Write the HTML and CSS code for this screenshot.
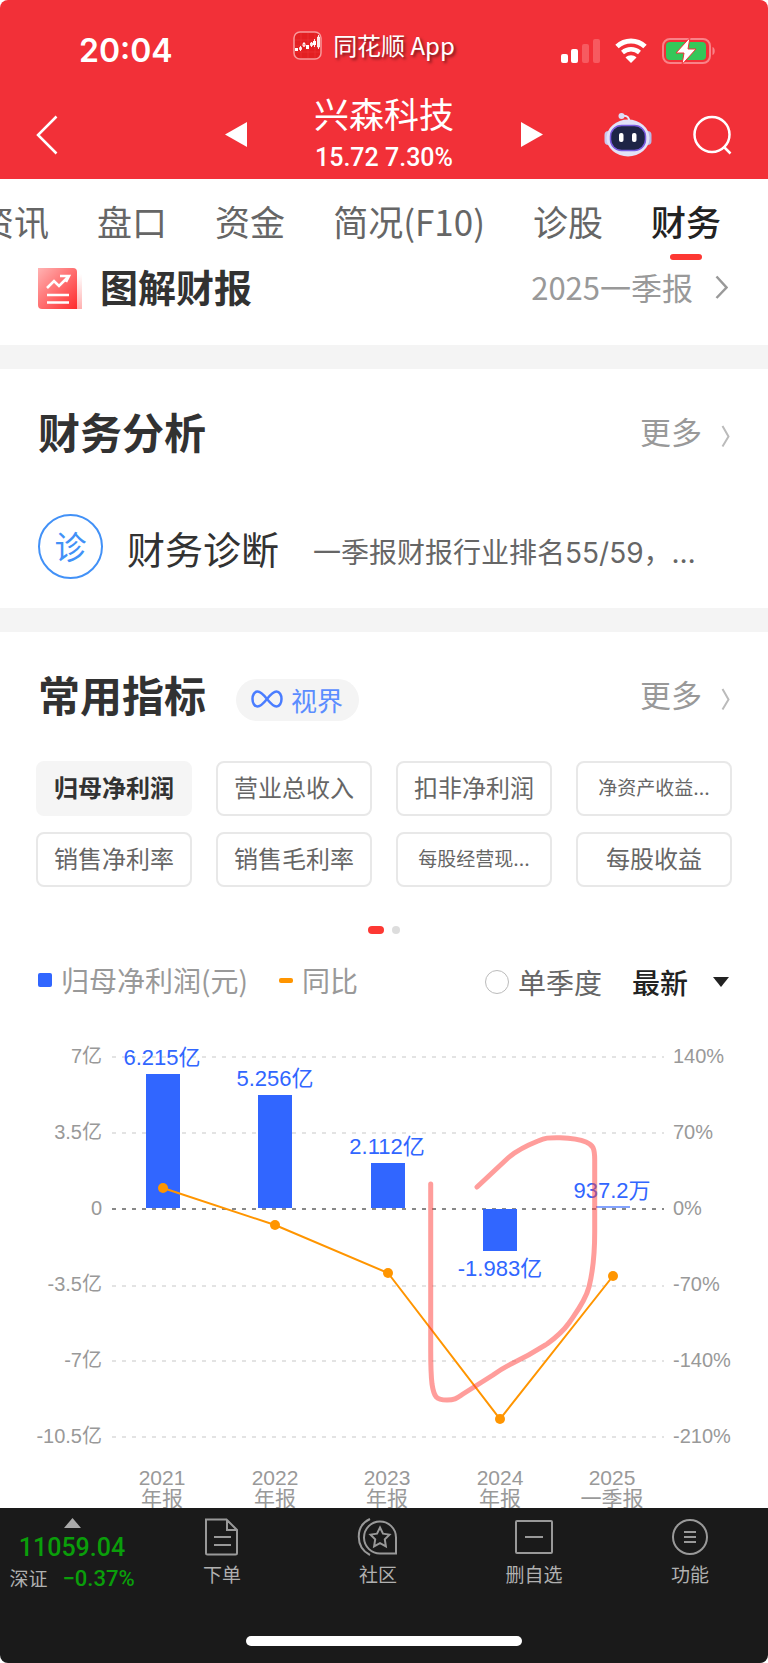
FILE: index.html
```html
<!DOCTYPE html>
<html lang="zh-CN">

<head>
  <meta charset="utf-8">
  <meta name="viewport" content="width=device-width, initial-scale=1">
  <title>兴森科技 - 财务</title>
  <link rel="stylesheet" href="styles.css">
</head>

<body>
  <div class="app">
    <header class="header">
      <div class="status-bar">
        <span class="time">20:04</span>
        <div class="app-name">
          <svg width="29" height="29" viewBox="0 0 29 29">
            <rect x="1" y="1" width="27" height="27" rx="6" fill="#e31f22" stroke="#f8999b" stroke-width="1.5" />
            <path d="M2 9h25M2 15h25M2 21h25M8 2v25M15 2v25M22 2v25" stroke="#ee3a3c" stroke-width="0.5" />
            <path d="M2 17h3v3h-3zM13 14h3v4h-3zM20 10h3v4h-3z" fill="#fff" />
            <path d="M7.500 15v5M6.500 16.500h2v2h-2zM11 11v5M10 12.500h2v2.500h-2zM18.500 11v5M17.500 12h2v2.500h-2zM21.500 8v8M25.500 4v14M24.500 6h2v10h-2z" fill="none" stroke="#fff" stroke-width="0.900" />
          </svg>
          <span>同花顺 App</span>
        </div>
        <div class="signals">
          <svg width="39" height="26" viewBox="0 0 39 26">
            <rect x="0" y="16" width="7" height="9" rx="2" fill="#fff" />
            <rect x="10" y="11" width="7" height="14" rx="2" fill="#fff" />
            <rect x="21" y="6" width="7" height="19" rx="2" fill="#f75a60" />
            <rect x="32" y="1" width="7" height="24" rx="2" fill="#f75a60" />
          </svg>
          <svg width="32" height="26" viewBox="0 0 32 26">
            <path d="M2 8.500C10 1.200 22 1.200 30 8.500" fill="none" stroke="#fff" stroke-width="5" />
            <path d="M7.500 14.500c5-4.300 12-4.300 17 0" fill="none" stroke="#fff" stroke-width="4.500" />
            <path d="M16 25l-5.500-5.500c3-3 8-3 11 0z" fill="#fff" />
          </svg>
          <svg width="54" height="28" viewBox="0 0 54 28">
            <rect x="1" y="2" width="47" height="24" rx="7" fill="none" stroke="#f98288" stroke-width="2" />
            <rect x="4" y="5" width="40" height="18" rx="4" fill="#34c759" />
            <path d="M50.500 10c3 1 3 7 0 8z" fill="#f98288" />
            <path d="M28 0.500L14 16h8l-2 11.500L34 12h-8z" fill="#fff" stroke="#f23038" stroke-width="1" />
          </svg>
        </div>
      </div>
      <div class="nav-bar">
        <button class="icon-btn" aria-label="返回">
          <svg width="22" height="40" viewBox="0 0 22 40">
            <path d="M20.500 1.500L2 20l18.500 18.500" fill="none" stroke="#fff" stroke-width="2.500" />
          </svg>
        </button>
        <div class="stock">
          <button class="icon-btn" aria-label="上一只">
            <svg width="22" height="25" viewBox="0 0 22 25"><path d="M22 0v25L0 12.500z" fill="#fff" /></svg>
          </button>
          <div class="stock-info">
            <h1>兴森科技</h1>
            <p>15.72 7.30%</p>
          </div>
          <button class="icon-btn" aria-label="下一只">
            <svg width="22" height="25" viewBox="0 0 22 25"><path d="M0 0v25L22 12.500z" fill="#fff" /></svg>
          </button>
        </div>
        <div class="nav-tools">
          <button class="icon-btn" aria-label="智能助手">
            <svg width="48" height="46" viewBox="0 0 48 46">
              <path d="M18 4c6-1 7 2 7.500 6" fill="none" stroke="#e6e6fa" stroke-width="2" />
              <circle cx="17.500" cy="4" r="3" fill="#dcdcf5" />
              <rect x="0.500" y="19" width="8" height="14" rx="4" fill="#c9c9ee" />
              <rect x="39.500" y="19" width="8" height="14" rx="4" fill="#b9b9e6" />
              <ellipse cx="24" cy="26" rx="21.500" ry="18.500" fill="#e2e2f8" />
              <rect x="6.500" y="13.500" width="35" height="25" rx="11" fill="#1e2546" stroke="#7a5ce0" stroke-width="1.500" />
              <rect x="15" y="21" width="4.500" height="9" rx="2" fill="#fff" />
              <rect x="28" y="21" width="4.500" height="9" rx="2" fill="#fff" />
            </svg>
          </button>
          <button class="icon-btn" aria-label="搜索">
            <svg width="39" height="40" viewBox="0 0 39 40">
              <circle cx="19" cy="19.500" r="17.500" fill="none" stroke="#fff" stroke-width="2.500" />
              <path d="M30.500 31.500l7 7" stroke="#fff" stroke-width="2.500" />
            </svg>
          </button>
        </div>
      </div>
    </header>

    <nav class="tabs">
      <a href="#">资讯</a>
      <a href="#">盘口</a>
      <a href="#">资金</a>
      <a href="#">简况(F10)</a>
      <a href="#">诊股</a>
      <a href="#" class="active">财务</a>
    </nav>

    <main class="content">
      <section class="report">
        <svg width="44" height="41" viewBox="0 0 44 41">
          <defs>
            <linearGradient id="cover" x1="0" y1="0" x2="1" y2="1">
              <stop offset="0" stop-color="#ffb3b3" />
              <stop offset="1" stop-color="#ff2a2c" />
            </linearGradient>
            <linearGradient id="page" x1="0" y1="0" x2="0" y2="1">
              <stop offset="0" stop-color="#fff" />
              <stop offset="1" stop-color="#ffb0b0" />
            </linearGradient>
          </defs>
          <path d="M36 6h8v35h-8z" fill="url(#page)" />
          <path d="M0 0h35a4 4 0 0 1 4 4v37H4a4 4 0 0 1-4-4z" fill="url(#cover)" />
          <path d="M9 20l7-7 5 5 9-9M22 8h9l-3 6M9 27h22M9 34.500h22" fill="none" stroke="#fff" stroke-width="2.600" />
        </svg>
        <h2 class="report-title">图解财报</h2>
        <a href="#" class="more">2025一季报
          <svg width="13" height="24" viewBox="0 0 13 24"><path d="M1.500 1.500L11.500 12.500l-10 10.500" fill="none" stroke="#999" stroke-width="2.500" /></svg>
        </a>
      </section>

      <section class="block">
        <div class="block-head">
          <h2>财务分析</h2>
          <a href="#" class="more">更多
            <svg width="9" height="32" viewBox="0 0 9 32"><path d="M1.500 11l6 10.500-6 10" fill="none" stroke="#bbb" stroke-width="2" /></svg>
          </a>
        </div>
        <a href="#" class="diagnose">
          <span class="diagnose-icon">诊</span>
          <span class="diagnose-name">财务诊断</span>
          <span class="diagnose-text">一季报财报行业排名55/59，…</span>
        </a>
      </section>

      <section class="block">
        <div class="block-head">
          <h2>常用指标</h2>
          <button class="vision">
            <svg width="32" height="18" viewBox="0 0 32 18">
              <path d="M16 9C12 4 9.500 1.500 6.500 1.500 3.500 1.500 1.500 5 1.500 9s2 7.500 5 7.500c3 0 5.500-2.500 9.500-7.500s6.500-7.500 9.500-7.500 5 3.500 5 7.500-2 7.500-5 7.500c-3 0-5.500-2.500-9.500-7.500z" fill="none" stroke="#4a7dff" stroke-width="2.500" />
            </svg>
            视界
          </button>
          <a href="#" class="more">更多
            <svg width="9" height="32" viewBox="0 0 9 32"><path d="M1.500 11l6 10.500-6 10" fill="none" stroke="#bbb" stroke-width="2" /></svg>
          </a>
        </div>
        <div class="chips">
          <button class="chip selected">归母净利润</button>
          <button class="chip">营业总收入</button>
          <button class="chip">扣非净利润</button>
          <button class="chip small">净资产收益...</button>
          <button class="chip">销售净利率</button>
          <button class="chip">销售毛利率</button>
          <button class="chip small">每股经营现...</button>
          <button class="chip">每股收益</button>
        </div>
        <div class="dots">
          <span class="dot current"></span>
          <span class="dot"></span>
        </div>
        <div class="legend">
          <span class="legend-bar"></span>
          <span>归母净利润(元)</span>
          <span class="legend-line"></span>
          <span>同比</span>
          <div class="filters">
            <label class="quarter"><input type="radio" name="quarter">单季度</label>
            <label class="period">
              <select aria-label="报告期">
                <option>最新</option>
              </select>
              <svg width="16" height="10" viewBox="0 0 16 10"><path d="M0 0h16L8 10z" fill="#222" /></svg>
            </label>
          </div>
        </div>
      </section>

      <svg class="chart" viewBox="0 0 768 510">
        <g class="grid">
          <path d="M112 47H664M112 123H664M112 276H664M112 351H664M112 427H664" />
          <path class="zero" d="M112 199H664" />
        </g>
        <g class="axis left">
          <text x="102" y="53">7亿</text>
          <text x="102" y="129">3.5亿</text>
          <text x="102" y="205">0</text>
          <text x="102" y="281">-3.5亿</text>
          <text x="102" y="357">-7亿</text>
          <text x="102" y="433">-10.5亿</text>
        </g>
        <g class="axis">
          <text x="673" y="53">140%</text>
          <text x="673" y="129">70%</text>
          <text x="673" y="205">0%</text>
          <text x="673" y="281">-70%</text>
          <text x="673" y="357">-140%</text>
          <text x="673" y="433">-210%</text>
        </g>
        <g class="bars">
          <rect x="146" y="64" width="34" height="134" />
          <rect x="258" y="85" width="34" height="113" />
          <rect x="371" y="153" width="34" height="45" />
          <rect x="483" y="199" width="34" height="42" />
          <rect x="596" y="196" width="34" height="2" opacity="0.6" />
        </g>
        <g class="values">
          <text x="162" y="55">6.215亿</text>
          <text x="275" y="76">5.256亿</text>
          <text x="387" y="144">2.112亿</text>
          <text x="500" y="266">-1.983亿</text>
          <text x="612" y="188">937.2万</text>
        </g>
        <polyline class="trend" points="163,178 275,215 388,263 500,409 613,266" />
        <g class="points">
          <circle cx="163" cy="178" r="5" />
          <circle cx="275" cy="215" r="5" />
          <circle cx="388" cy="263" r="5" />
          <circle cx="500" cy="409" r="5" />
          <circle cx="613" cy="266" r="5" />
        </g>
        <path class="mark" d="M430.700 174V340C430.700 360 431 366 432 374C434 387 436 390 447 390C455 390 457 388 463 384L493 365C500 360 505 357 513 353C530 345 536 341 547 334C558 326 564 320 569 313C575 304 585 292 589 277C594 257 594.700 240 594.700 222V150C594.700 138 593 135 586 132C578 128.500 568 128 560 127.700C548 127.500 545 128 538 131C528 135 517 140 508 148L477 177" />
        <g class="years">
          <text x="162" y="475">2021</text>
          <text x="162" y="496">年报</text>
          <text x="275" y="475">2022</text>
          <text x="275" y="496">年报</text>
          <text x="387" y="475">2023</text>
          <text x="387" y="496">年报</text>
          <text x="500" y="475">2024</text>
          <text x="500" y="496">年报</text>
          <text x="612" y="475">2025</text>
          <text x="612" y="496">一季报</text>
        </g>
      </svg>
    </main>

    <footer class="footer">
      <div class="toolbar">
        <button class="index">
          <svg width="17" height="10" viewBox="0 0 17 10"><path d="M8.500 0L17 10H0z" fill="#aaa" /></svg>
          <span class="index-value">11059.04</span>
          <span class="index-row">深证<span class="index-change">−0.37%</span></span>
        </button>
        <button class="tool">
          <svg width="38" height="38" viewBox="0 0 38 38">
            <path d="M3 1.500h20.500L34 12v23a1.500 1.500 0 0 1-1.500 1.500h-28A1.500 1.500 0 0 1 3 35zM24 2v10h10M11 19h17M11 27h17" />
          </svg>
          下单
        </button>
        <button class="tool">
          <svg width="42" height="38" viewBox="0 0 42 38">
            <path d="M13 1C-2 8-2 29 13 37" />
            <path d="M39 35.500H23.500a16 16 0 1 1 15.500-16z" />
            <path d="M23 9.500l3 6.200 6.500.900-4.700 4.800 1.100 6.900-5.900-3.200-5.900 3.200 1.100-6.900-4.700-4.800 6.500-.900z" />
          </svg>
          社区
        </button>
        <button class="tool">
          <svg width="38" height="38" viewBox="0 0 38 38">
            <rect x="1" y="3" width="36" height="32" rx="1" />
            <path d="M10 19h18" />
          </svg>
          删自选
        </button>
        <button class="tool">
          <svg width="38" height="38" viewBox="0 0 38 38">
            <circle cx="19" cy="19" r="17" />
            <path d="M13 14h12M13 19h12M13 24h12" />
          </svg>
          功能
        </button>
      </div>
      <div class="home-bar"></div>
    </footer>
  </div>
</body>

</html>
```

FILE: styles.css
```css
* {
  box-sizing: border-box;
}

body {
  margin: 0;
  background-color: white;
  color: #323232;
  font-family: "Noto Sans CJK SC", sans-serif;
}

h1,
h2,
p {
  margin: 0;
}

a {
  color: inherit;
  text-decoration: none;
}

button {
  padding: 0;
  border: none;
  background: none;
  color: inherit;
  font-family: inherit;
  cursor: pointer;
}

svg {
  display: block;
  flex-shrink: 0;
}

.app {
  display: flex;
  flex-direction: column;
  height: 100vh;
  overflow: hidden;
  border-radius: 8px;
}

/* header */
.header {
  flex-shrink: 0;
  background-color: #f23038;
  color: white;
}

.status-bar {
  display: grid;
  grid-template-columns: 1fr auto 1fr;
  align-items: center;
  height: 90px;
  padding-right: 20px;
}

.time {
  padding: 12px 0 0 79px;
  font-family: Inter, sans-serif;
  font-size: 32px;
  font-weight: 600;
  line-height: 40px;
}

.app-name {
  display: flex;
  align-items: center;
  gap: 11px;
  font-size: 24px;
  line-height: 30px;
  text-shadow: 2px 2px 3px rgba(0, 0, 0, 0.5);
}

.signals {
  display: flex;
  align-items: center;
  justify-content: flex-end;
  gap: 15px;
  padding: 12px 32px 0 0;
}

.nav-bar {
  display: grid;
  grid-template-columns: 1fr auto 1fr;
  align-items: center;
  height: 89px;
  padding: 0 36px;
}

.icon-btn {
  justify-self: start;
}

.stock {
  display: flex;
  align-items: center;
  gap: 67px;
}

.stock-info {
  text-align: center;
}

.stock-info h1 {
  font-size: 35px;
  font-weight: 400;
  line-height: 46px;
}

.stock-info p {
  font-family: Roboto, sans-serif;
  font-size: 25px;
  font-weight: 500;
  line-height: 43px;
}

.nav-tools {
  display: flex;
  align-items: center;
  justify-content: flex-end;
  gap: 41px;
}

/* tabs */
.tabs {
  display: flex;
  flex-shrink: 0;
  justify-content: flex-end;
  gap: 48px;
  height: 82px;
  padding: 18px 47px 0 0;
  color: #666;
  font-size: 35px;
  line-height: 48px;
  white-space: nowrap;
}

.tabs .active {
  color: #222;
  font-weight: 500;
}

.tabs .active::after {
  content: "";
  display: block;
  width: 32px;
  height: 6px;
  margin: 9px auto 0;
  border-radius: 3px;
  background-color: #fd3833;
}

/* content */
.content {
  flex: 1;
  min-height: 0;
  overflow: hidden;
}

.report {
  display: flex;
  align-items: center;
  height: 84px;
  padding: 0 40px 30px 38px;
}

.report-title {
  margin-left: 18px;
  padding-bottom: 4px;
  font-size: 38px;
  line-height: 50px;
}

.more {
  display: flex;
  align-items: center;
  gap: 19px;
  margin-left: auto;
  padding-bottom: 4px;
  color: #999;
  font-size: 31px;
  line-height: 50px;
}

.report .more {
  gap: 22px;
  padding-bottom: 2px;
}

.block {
  padding: 34px 38px 0;
  border-top: 24px solid #f4f4f4;
}

.block-head {
  display: flex;
  align-items: center;
  height: 60px;
}

.block-head h2 {
  padding-bottom: 4px;
  font-size: 42px;
  line-height: 56px;
}

.diagnose {
  display: flex;
  align-items: center;
  padding: 51px 0 29px;
}

.diagnose-icon {
  width: 65px;
  height: 65px;
  border: 2px solid #4291f7;
  border-radius: 50%;
  color: #4291f7;
  font-size: 32px;
  line-height: 59px;
  text-align: center;
}

.diagnose-name {
  margin-left: 24px;
  padding-top: 2px;
  font-size: 38px;
  line-height: 56px;
}

.diagnose-text {
  margin-left: 34px;
  padding-top: 12px;
  color: #666;
  font-family: Inter, "Noto Sans CJK SC", sans-serif;
  font-size: 28px;
  line-height: 50px;
  white-space: nowrap;
}

.vision {
  display: flex;
  align-items: center;
  gap: 8px;
  height: 42px;
  margin: 8px 0 0 30px;
  padding: 0 16px 2px 15px;
  border-radius: 21px;
  background-color: #f4f4f4;
  color: #5b8dff;
  font-size: 26px;
}

.chips {
  display: grid;
  grid-template-columns: repeat(4, 1fr);
  gap: 16px 24px;
  margin: 35px -2px 0;
}

.chip {
  height: 55px;
  padding-bottom: 4px;
  border: 2px solid #e8e8e8;
  border-radius: 8px;
  color: #666;
  font-size: 24px;
  line-height: 46px;
  white-space: nowrap;
}

.chip.small {
  padding-bottom: 0;
  font-family: Inter, "Noto Sans CJK SC", sans-serif;
  font-size: 19px;
}

.chip.selected {
  border-color: #f5f5f5;
  background-color: #f5f5f5;
  color: #323232;
  font-weight: bold;
}

.dots {
  display: flex;
  justify-content: center;
  gap: 8px;
  margin-top: 39px;
}

.dot {
  width: 8px;
  height: 8px;
  border-radius: 4px;
  background-color: #ddd;
}

.dot.current {
  width: 16px;
  background-color: #fd3833;
}

.legend {
  display: flex;
  align-items: center;
  height: 42px;
  margin-top: 25px;
  color: #999;
  font-size: 28px;
  line-height: 40px;
  white-space: nowrap;
}

.legend-bar {
  width: 14px;
  height: 14px;
  margin-right: 9px;
  border-radius: 2px;
  background-color: #3166ff;
}

.legend-line {
  width: 14px;
  height: 5px;
  margin: 0 9px 0 31px;
  border-radius: 2px;
  background-color: #ff9500;
}

.filters {
  display: flex;
  align-items: center;
  gap: 30px;
  margin-left: auto;
  padding: 4px 1px 0 0;
}

.quarter,
.period {
  display: flex;
  align-items: center;
  color: #666;
}

.quarter input {
  appearance: none;
  width: 24px;
  height: 24px;
  margin: 0 9px 0 0;
  border: 1px solid #bbb;
  border-radius: 50%;
}

.period {
  gap: 24px;
}

.period select {
  appearance: none;
  padding: 0;
  border: none;
  background: none;
  color: #222;
  font-family: inherit;
  font-size: 28px;
  font-weight: 500;
  line-height: 40px;
}

/* chart */
.chart {
  width: 100%;
  margin-top: 9px;
  font-family: "Liberation Sans", "Noto Sans CJK SC", sans-serif;
}

.grid path {
  stroke: #e3e3e3;
  stroke-width: 2;
  stroke-dasharray: 4 6;
}

.grid .zero {
  stroke: #888;
}

.axis {
  fill: #999;
  font-size: 20px;
}

.axis.left {
  text-anchor: end;
}

.bars {
  fill: #3166ff;
}

.values {
  fill: #3166ff;
  font-size: 22px;
  text-anchor: middle;
}

.trend {
  fill: none;
  stroke: #ff9500;
  stroke-width: 2;
}

.points {
  fill: #ff9500;
}

.mark {
  fill: none;
  stroke: rgba(255, 60, 55, 0.5);
  stroke-width: 5;
  stroke-linecap: round;
}

.years {
  fill: #999;
  font-size: 21px;
  text-anchor: middle;
}

/* footer */
.footer {
  display: flex;
  flex-direction: column;
  flex-shrink: 0;
  justify-content: space-between;
  height: 155px;
  padding-bottom: 17px;
  background-color: #1a1a1a;
  color: #b0b0b0;
}

.toolbar {
  display: flex;
  padding-top: 10px;
}

.index {
  display: flex;
  flex-direction: column;
  align-items: center;
  width: 144px;
  font-size: 19px;
}

.index-value {
  margin-top: 4px;
  color: #0a9e0a;
  font-family: Roboto, sans-serif;
  font-size: 25px;
  font-weight: 500;
  line-height: 32px;
}

.index-row {
  display: flex;
  align-items: baseline;
  gap: 15px;
  line-height: 28px;
}

.index-change {
  color: #0a9e0a;
  font-family: Roboto, sans-serif;
  font-size: 22px;
  font-weight: 500;
}

.tool {
  display: flex;
  flex: 1;
  flex-direction: column;
  align-items: center;
  gap: 4px;
  font-size: 19px;
  line-height: 28px;
}

.tool svg {
  fill: none;
  stroke: #999;
  stroke-width: 2;
}

.home-bar {
  width: 36%;
  height: 10px;
  margin: 0 auto;
  border-radius: 5px;
  background-color: white;
}
```
